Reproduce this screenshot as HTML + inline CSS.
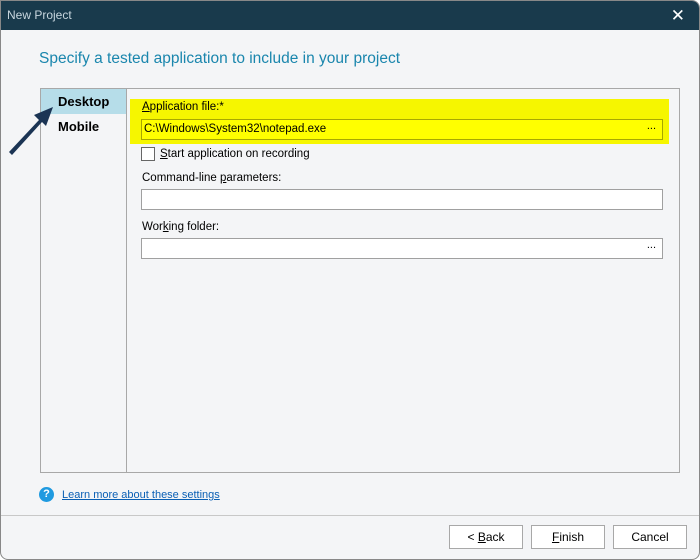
<!DOCTYPE html>
<html><head><style>
body{margin:0;width:700px;height:560px;overflow:hidden;background:#fff;font-family:"Liberation Sans",sans-serif;font-size:12px;color:#000}
.win{position:absolute;left:0;top:0;width:698px;height:558px;background:#f4f5f7;border:1px solid #888;border-radius:0 8px 8px 8px;overflow:hidden}
.tb{position:absolute;left:0;top:0;right:0;height:29px;background:#193a4c;color:#c8d6de;font-size:12px;line-height:29px;padding-left:6px}
.x{position:absolute;right:14px;top:0;color:#fff;font-size:17px}
.h{position:absolute;left:38px;top:49px;font-size:15.5px;color:#1a86ad}
.panel{position:absolute;left:39px;top:87px;width:638px;height:383px;border:1px solid #a8a8a8;background:#f4f5f7}
.list{position:absolute;left:0;top:0;width:85px;height:383px;border-right:1px solid #a8a8a8}
.sel{position:absolute;left:0;top:0;width:85px;height:25px;background:#b6dde9}
.li{position:absolute;left:17px;font-weight:bold;font-size:13px}
.yel{position:absolute;left:89px;top:10px;width:539px;height:45px;background:#f6f600}
.lbl{position:absolute;left:101px;font-size:11.5px}
.inp{position:absolute;left:100px;width:518px;height:19px;border:1px solid #a0a0a0;background:#fff;font-size:11.5px;line-height:19px;padding-left:2px;box-sizing:content-box}
.dots{position:absolute;right:6px;top:-3px;font-size:11px}
u{text-decoration:underline}
.sep{position:absolute;left:0;right:0;top:514px;border-top:1px solid #c8c8c8}
.btn{position:absolute;top:524px;width:72px;height:22px;border:1px solid #a8a8a8;background:#fff;text-align:center;line-height:22px;font-size:12px}
</style></head><body>
<div class="win">
<div class="tb">New Project<span class="x">✕</span></div>
<div class="h">Specify a tested application to include in your project</div>
<div class="panel">
 <div class="list"><div class="sel"></div><div class="li" style="top:5px">Desktop</div><div class="li" style="top:30px">Mobile</div></div>
 <div class="yel"></div>
 <div class="lbl" style="top:12px"><u>A</u>pplication file:*</div>
 <div class="inp" style="top:30px;background:#ffff00;border-color:#a8a800">C:\Windows\System32\notepad.exe<span class="dots">...</span></div>
 <div style="position:absolute;left:100px;top:58px;width:12px;height:12px;border:1px solid #666;background:#fff"></div>
 <div class="lbl" style="top:59px;left:119px"><u>S</u>tart application on recording</div>
 <div class="lbl" style="top:83px">Command-line <u>p</u>arameters:</div>
 <div class="inp" style="top:100px"></div>
 <div class="lbl" style="top:132px">Wor<u>k</u>ing folder:</div>
 <div class="inp" style="top:149px"><span class="dots">...</span></div>
</div>
<svg style="position:absolute;left:0;top:0" width="60" height="160"><path d="M8 151 L38 119 L33 114 L52 106 L45 125 L41 121 L11 154 Z" fill="#1b3454"/></svg>
<div style="position:absolute;left:38px;top:486px;width:15px;height:15px;border-radius:50%;background:#1f9ae0;color:#fff;font-weight:bold;font-size:11px;text-align:center;line-height:15px">?</div>
<div style="position:absolute;left:61px;top:488px;font-size:11px;color:#0a5fb4;text-decoration:underline">Learn more about these settings</div>
<div class="sep"></div>
<div class="btn" style="left:448px">&lt; <u>B</u>ack</div>
<div class="btn" style="left:530px"><u>F</u>inish</div>
<div class="btn" style="left:612px">Cancel</div>
</div>
</body></html>
